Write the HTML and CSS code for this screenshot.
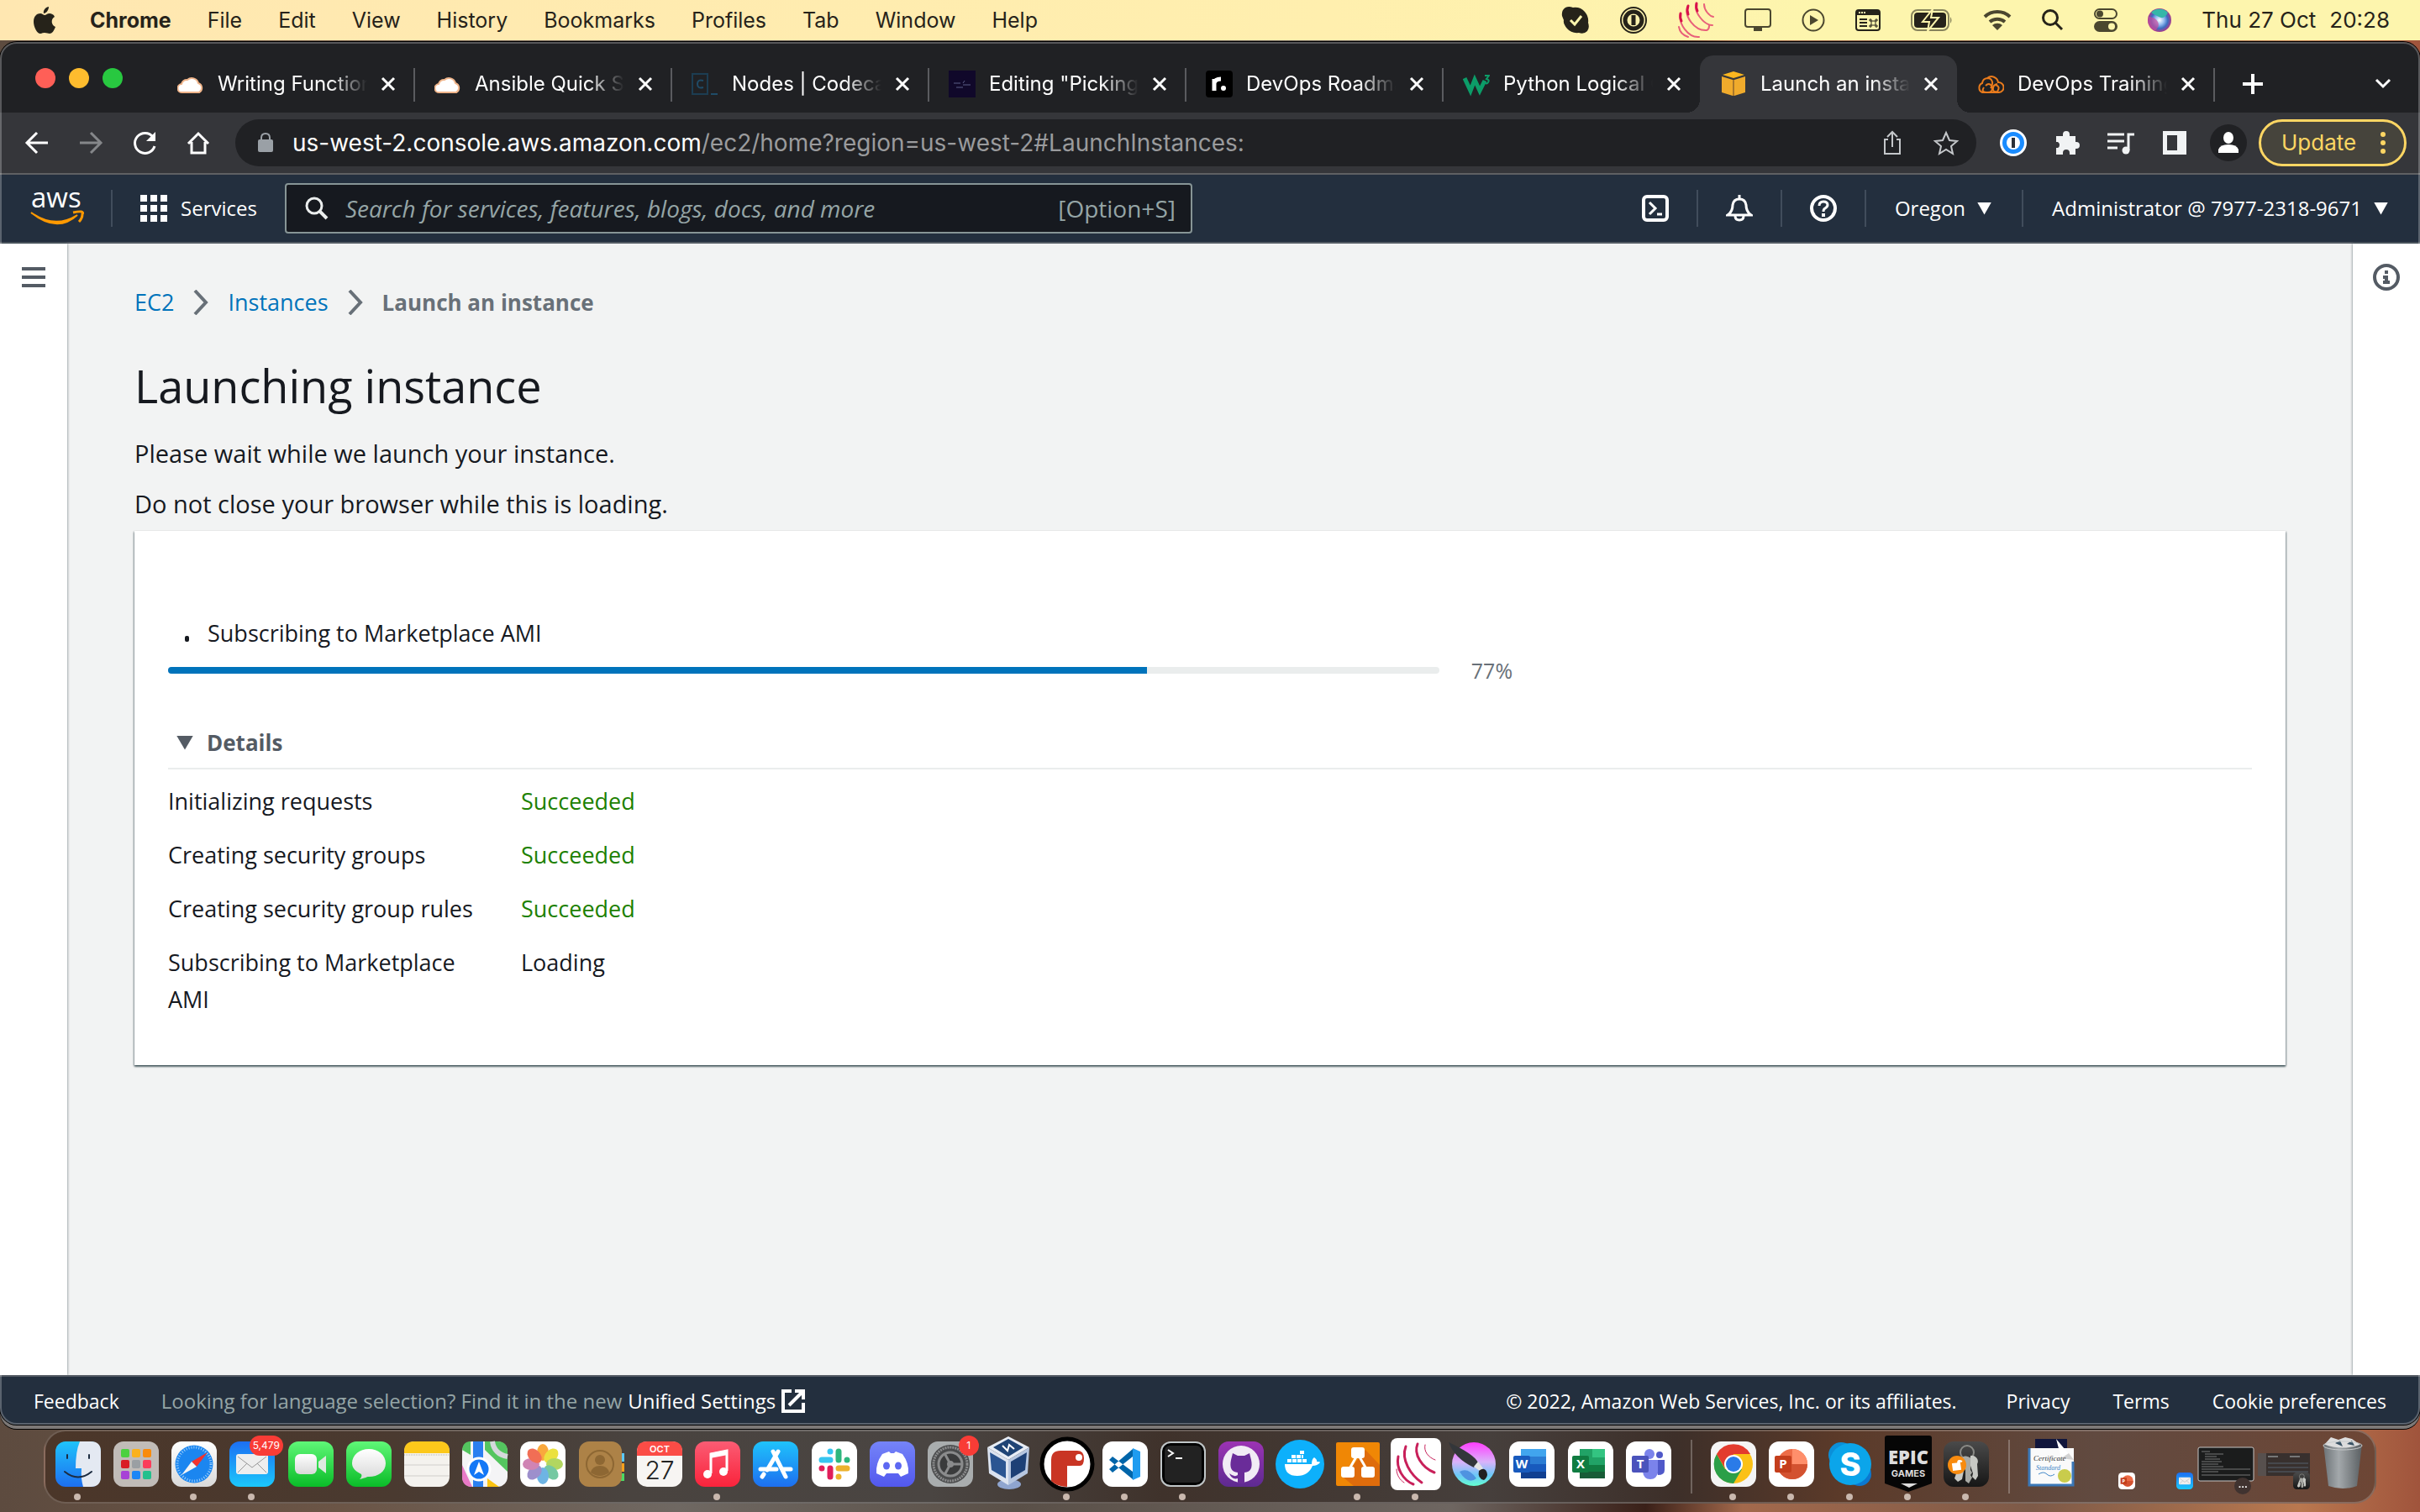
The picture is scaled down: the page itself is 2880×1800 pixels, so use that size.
FILE: index.html
```html
<!DOCTYPE html>
<html lang="en">
<head>
    <meta charset="UTF-8">
    <meta name="viewport" content="width=device-width, initial-scale=1.0">
    <title>Launch an instance | EC2 Management Console</title>
    <link rel="stylesheet" href="styles.css">
</head>
<body>
    <svg class="defs" width="0" height="0" aria-hidden="true">
        <defs>
            <linearGradient id="g-blue" x2="0" y2="1"><stop stop-color="#1fc3fb"/><stop offset="1" stop-color="#1d6ff0"/></linearGradient>
            <linearGradient id="g-mail" x2="0" y2="1"><stop stop-color="#1d6ff2"/><stop offset="1" stop-color="#1bc8fc"/></linearGradient>
            <linearGradient id="g-green" x2="0" y2="1"><stop stop-color="#5ff777"/><stop offset="1" stop-color="#0abc28"/></linearGradient>
            <linearGradient id="g-white" x2="0" y2="1"><stop stop-color="#fff"/><stop offset="1" stop-color="#d9d9d9"/></linearGradient>
            <linearGradient id="g-red" x2="0" y2="1"><stop stop-color="#fb5c74"/><stop offset="1" stop-color="#fa233b"/></linearGradient>
            <linearGradient id="g-discord" x2="0" y2="1"><stop stop-color="#7584f8"/><stop offset="1" stop-color="#5258ee"/></linearGradient>
            <linearGradient id="g-github" x2="0" y2="1"><stop stop-color="#9c33b4"/><stop offset="1" stop-color="#5d2a90"/></linearGradient>
            <linearGradient id="g-krita" x2="0" y2="1"><stop stop-color="#ff3dff"/><stop offset=".45" stop-color="#d9b3fa"/><stop offset=".75" stop-color="#6cc8f8"/><stop offset="1" stop-color="#64ffd0"/></linearGradient>
            <linearGradient id="g-dark" x2="0" y2="1"><stop stop-color="#4a4a4a"/><stop offset="1" stop-color="#161616"/></linearGradient>
            <linearGradient id="g-bin"><stop stop-color="#6c7276"/><stop offset=".4" stop-color="#a3a8ab"/><stop offset="1" stop-color="#5a5f62"/></linearGradient>
            <radialGradient id="g-siri"><stop stop-color="#fff"/><stop offset=".4" stop-color="#8fb8ee"/><stop offset=".7" stop-color="#3b6fc0"/><stop offset="1" stop-color="#a83a8c"/></radialGradient>
        </defs>
        <symbol id="close" viewBox="0 0 18 18"><path d="M2 2l14 14M16 2L2 16" stroke="#fff" stroke-width="3" fill="none"/></symbol>
        <symbol id="cloud" viewBox="0 0 32 32"><path d="M6 26a5 5 0 0 1-1-10 7 7 0 0 1 7-5 8 8 0 0 1 13 4 6 6 0 0 1 1 11z" fill="#fff" stroke="#f0b58b" stroke-width="2"/></symbol>
        <symbol id="fan" viewBox="0 0 54 54">
            <g fill="none" stroke="#c8205a" stroke-linecap="round">
                <path stroke-width="3" d="M15 6c-6 16 6 34 19 43"/>
                <path stroke-width="3" d="M29 3c-5 12 5 28 20 34"/>
                <path stroke-width="3" d="M6 18c-3 14 6 28 18 33"/>
                <path stroke-width="1" d="M38 4c-2 8 4 15 12 18M4 33c0 7 4 13 9 16"/>
            </g>
        </symbol>
        <symbol id="fan-outline" viewBox="0 0 44 44">
            <g fill="none" stroke="#e8607a" stroke-width="2" stroke-linecap="round">
                <path d="M13 5c-6 12 8 30 22 29q3-1 3-5M23 2c-4 10 9 26 19 26M4 14c-3 12 9 29 22 28M32 3c0 7 6 14 11 15M2 30c1 6 5 10 11 12"/>
                <path stroke="#d8104a" stroke-width="3" d="M13 5q-2 5 0 10M23 2q-1 5 1 9M4 14q-1 5 1 9"/>
            </g>
        </symbol>
        <symbol id="envelope" viewBox="0 0 38 24"><rect width="38" height="24" rx="3" fill="#eee"/><path d="M2 3l17 13L36 3M2 22l11-11M36 22L25 11" stroke="#999" stroke-width="1" fill="none"/></symbol>
        <symbol id="keys" viewBox="0 0 54 54"><rect width="54" height="54" rx="12" fill="url(#g-dark)"/><circle cx="28" cy="13" r="8" fill="none" stroke="#8a8a86" stroke-width="2"/><path d="M20 22a7 7 0 0 1 12-2v14l2 3-2 3 2 3-4 7-4-3V34z" fill="#a9aaa5"/><path d="M32 17a7 7 0 0 1 8 10l1 14-3 5-4-4 1-4-3-9zM24 28l-2 4 2 3-2 10-5 3-4-4 7-20z" fill="#c8c9c4"/></symbol>
    </svg>

    <!-- system menu bar -->
    <header class="menubar">
        <nav class="menus">
            <svg class="apple" viewBox="0 0 26 32"><path d="M18 0c0 4-3 8-6 8-1-4 3-8 6-8zM13 10c2 0 3-2 6-2 2 0 5 1 6 4-5 3-4 10 1 12-2 5-4 8-7 8-2 0-3-1-6-1s-3 1-5 1c-4 0-8-8-8-14 0-7 4-10 8-10 2 0 4 2 5 2z" fill="#26231a"/></svg>
            <button class="menu app">Chrome</button>
            <button class="menu">File</button>
            <button class="menu">Edit</button>
            <button class="menu">View</button>
            <button class="menu">History</button>
            <button class="menu">Bookmarks</button>
            <button class="menu">Profiles</button>
            <button class="menu">Tab</button>
            <button class="menu">Window</button>
            <button class="menu">Help</button>
        </nav>
        <div class="tray">
            <svg width="34" height="32" viewBox="0 0 34 32"><path d="M1 11Q0 4 5 1q4-2 9 0 9-1 14 5t4 13q2 6-1 10-4 4-10 2-9 1-14-5T3 16z" fill="#26231a"/><path d="M11 16l5 5 8-10" fill="none" stroke="#fdf5ad" stroke-width="3"/></svg>
            <svg width="32" height="32" viewBox="0 0 32 32"><circle cx="16" cy="16" r="15" fill="none" stroke="#26231a" stroke-width="2"/><circle cx="16" cy="16" r="10" fill="none" stroke="#26231a" stroke-width="5"/><path d="M16 10v12" stroke="#26231a" stroke-width="5"/></svg>
            <svg width="44" height="44"><use href="#fan-outline"/></svg>
            <svg width="32" height="28" viewBox="0 0 32 28"><rect x="1" y="1" width="30" height="21" rx="3" fill="none" stroke="#4b472f" stroke-width="2"/><path d="M11 23h10v4H11z" fill="#4b472f"/></svg>
            <svg width="28" height="28" viewBox="0 0 28 28"><circle cx="14" cy="14" r="12.500" fill="none" stroke="#4b472f" stroke-width="2"/><path d="M10 8l10 6-10 6z" fill="#4b472f"/></svg>
            <svg width="30" height="26" viewBox="0 0 30 26"><rect x="1" y="1" width="28" height="24" rx="3" fill="none" stroke="#26231a" stroke-width="2"/><path d="M1 1h28v6H1z" fill="#26231a"/><path d="M5 12h9M5 16h9M5 20h9" stroke="#26231a" stroke-width="2"/><path d="M19 14h5v5h-5zM19 14h-2v-2h2zM24 14v-2h2v2zM19 19h-2v2h2zM24 19h2v2h-2z" stroke="#26231a" stroke-width="1" fill="none"/><path d="M4 4h8" stroke="#fdf5ad" stroke-width="2" stroke-dasharray="2 1"/></svg>
            <svg width="50" height="26" viewBox="0 0 50 26"><rect x="1" y="1" width="44" height="24" rx="7" fill="none" stroke="#87835c" stroke-width="2"/><rect x="4" y="4" width="38" height="18" rx="4" fill="#26231a"/><path d="M47 9q3 4 0 8z" fill="#87835c"/><path d="M26 0L14 15h8l-2 11 13-16h-9z" fill="#26231a" stroke="#fdf5ad" stroke-width="2"/></svg>
            <svg width="34" height="24" viewBox="0 0 34 24"><path d="M2 8a22 22 0 0 1 30 0M8 14a14 14 0 0 1 18 0" fill="none" stroke="#4b472f" stroke-width="4"/><path d="M11 18a9 9 0 0 1 12 0l-6 6z" fill="#4b472f"/></svg>
            <svg width="26" height="26" viewBox="0 0 26 26"><circle cx="10" cy="10" r="8.500" fill="none" stroke="#26231a" stroke-width="3"/><path d="M16 16l8 8" stroke="#26231a" stroke-width="3"/></svg>
            <svg width="28" height="28" viewBox="0 0 28 28"><rect x="1" y="1" width="26" height="11" rx="5.500" fill="none" stroke="#4b472f" stroke-width="2"/><circle cx="7" cy="6.500" r="4" fill="#4b472f"/><rect y="15" width="28" height="13" rx="6.500" fill="#4b472f"/><circle cx="21" cy="21.500" r="4" fill="#fdf5ad"/></svg>
            <svg width="28" height="28" viewBox="0 0 28 28"><circle cx="14" cy="14" r="14" fill="url(#g-siri)"/><path d="M4 5a14 14 0 0 1 20 0q-4 7-8 6T4 5z" fill="#35b7a8"/><path d="M1 10q8 0 11 6T8 27Q-2 21 1 10z" fill="#c94a9c" opacity=".7"/></svg>
            <time class="clock"><span>Thu 27 Oct</span><span>20:28</span></time>
        </div>
    </header>

    <div class="window">
        <!-- tabs -->
        <div class="tabstrip">
            <div class="lights">
                <button class="light light-red" aria-label="Close window"></button>
                <button class="light light-yellow" aria-label="Minimise window"></button>
                <button class="light light-green" aria-label="Zoom window"></button>
            </div>
            <div class="tab">
                <svg class="favicon"><use href="#cloud"/></svg>
                <span class="tab-title">Writing Functions</span>
                <button class="tab-close" aria-label="Close tab"><svg><use href="#close"/></svg></button>
            </div>
            <div class="tab">
                <svg class="favicon"><use href="#cloud"/></svg>
                <span class="tab-title">Ansible Quick Start</span>
                <button class="tab-close" aria-label="Close tab"><svg><use href="#close"/></svg></button>
            </div>
            <div class="tab">
                <svg class="favicon" viewBox="0 0 32 32"><rect x="1" y="4" width="18" height="24" fill="none" stroke="#1c3d52" stroke-width="2"/><path d="M14 12q-7-2-7 4t7 4M23 28h8" fill="none" stroke="#1f4c68" stroke-width="2"/></svg>
                <span class="tab-title">Nodes | Codecademy</span>
                <button class="tab-close" aria-label="Close tab"><svg><use href="#close"/></svg></button>
            </div>
            <div class="tab">
                <svg class="favicon" viewBox="0 0 32 32"><path d="M0 0h32v32H0z" fill="#10082a"/><path d="M6 15h8M17 17h9M9 20h8M17 15l2-3" stroke="#5b5f86" stroke-width="1"/></svg>
                <span class="tab-title">Editing "Picking a"</span>
                <button class="tab-close" aria-label="Close tab"><svg><use href="#close"/></svg></button>
            </div>
            <div class="tab">
                <svg class="favicon" viewBox="0 0 32 32"><rect width="32" height="32" rx="4"/><path d="M10 24V10M10 15q1-5 8-5" stroke="#fff" stroke-width="5" fill="none"/><circle cx="21" cy="21" r="3" fill="#fff"/></svg>
                <span class="tab-title">DevOps Roadmap</span>
                <button class="tab-close" aria-label="Close tab"><svg><use href="#close"/></svg></button>
            </div>
            <div class="tab tab-before">
                <svg class="favicon" viewBox="0 0 32 32"><path d="M2 9l7 15 5-13 6 13 6-12" fill="none" stroke="#0c9c68" stroke-width="5"/><path d="M26 6h5l-3 4q4 1 2 4t-4 0" fill="none" stroke="#0c9c68" stroke-width="2"/></svg>
                <span class="tab-title">Python Logical Operators</span>
                <button class="tab-close" aria-label="Close tab"><svg><use href="#close"/></svg></button>
            </div>
            <div class="tab tab-active">
                <svg class="favicon" viewBox="0 0 32 32"><path d="M2 7l13 4v19L2 26zM17 11l13-4v19l-13 4z" fill="#f0ab2c"/><path d="M15 11h2v19h-2z" fill="#a8762a"/><path d="M3 5l13-4 13 4-13 4z" fill="#fbb61f"/></svg>
                <span class="tab-title">Launch an instance</span>
                <button class="tab-close" aria-label="Close tab"><svg><use href="#close"/></svg></button>
            </div>
            <div class="tab">
                <svg class="favicon" viewBox="0 0 32 32"><path d="M6 26a6 6 0 0 1 0-11 7 7 0 0 1 6-6 8 8 0 0 1 13 5 6 6 0 0 1 1 12zM12 9c6 0 8 6 4 12M10 18q4-4 7 0 3 8-5 8t-4-6M22 17q6 2 2 8-6 1-5-4 0-4 5-5" fill="none" stroke="#e97b1c" stroke-width="2"/></svg>
                <span class="tab-title">DevOps Training</span>
                <button class="tab-close" aria-label="Close tab"><svg><use href="#close"/></svg></button>
            </div>
            <button class="new-tab" aria-label="New tab"><svg width="24" height="24" viewBox="0 0 24 24"><path d="M12 0v24M0 12h24" stroke="#fff" stroke-width="4"/></svg></button>
            <button class="tab-search" aria-label="Search tabs"><svg width="20" height="14" viewBox="0 0 20 14"><path d="M2 2l8 8 8-8" fill="none" stroke="#fff" stroke-width="3"/></svg></button>
        </div>

        <!-- address bar -->
        <div class="toolbar">
            <button class="tool" aria-label="Back"><svg viewBox="0 0 32 32"><path d="M29 16H5M16 4L4 16l12 12" stroke="#fff" stroke-width="3" fill="none"/></svg></button>
            <button class="tool" aria-label="Forward"><svg viewBox="0 0 32 32"><path d="M3 16h24M16 4l12 12-12 12" stroke="#85878a" stroke-width="3" fill="none"/></svg></button>
            <button class="tool" aria-label="Reload"><svg viewBox="0 0 32 32"><path d="M26 9a12 12 0 1 0 2 11" stroke="#fff" stroke-width="3" fill="none"/><path d="M29 3v11H18z" fill="#fff"/></svg></button>
            <button class="tool" aria-label="Home"><svg viewBox="0 0 32 32"><path d="M8 15v13h16V15M4 17L16 5l12 12" stroke="#fff" stroke-width="3" fill="none"/></svg></button>
            <div class="omnibox">
                <svg class="lock" width="18" height="24" viewBox="0 0 18 24"><path d="M4 10V6q0-5 5-5t5 5v4" fill="none" stroke="#9aa0a6" stroke-width="2"/><rect y="8" width="18" height="15" rx="2" fill="#9aa0a6"/></svg>
                <label for="address">us-west-2.console.aws.amazon.com</label>
                <input id="address" type="text" value="/ec2/home?region=us-west-2#LaunchInstances:">
                <button class="tool" aria-label="Share"><svg viewBox="0 0 32 32"><path d="M11 12H7v17h18V12h-4M16 21V3M10 9l6-6 6 6" stroke="#c4c7ca" stroke-width="2" fill="none"/></svg></button>
                <button class="tool" aria-label="Bookmark this tab"><svg viewBox="0 0 32 32"><path d="M16 4l4 9 9 1-7 6 2 9-8-5-8 5 2-9-7-6 9-1z" stroke="#c4c7ca" stroke-width="2" fill="none"/></svg></button>
            </div>
            <div class="extensions">
                <button class="tool" aria-label="1Password"><svg viewBox="0 0 32 32"><circle cx="16" cy="16" r="16" fill="#fff"/><circle cx="16" cy="16" r="13" fill="#1a8cff"/><circle cx="16" cy="16" r="8" fill="#fff"/><path d="M16 10v12" stroke="#2b3038" stroke-width="4"/></svg></button>
                <button class="tool" aria-label="Extensions"><svg viewBox="0 0 32 32"><path d="M3 8h8V6a4 4 0 0 1 8 0v2h7v7h1a4 4 0 0 1 0 8h-1v7h-7v-2a4 4 0 0 0-8 0v2H3v-8h2a4 4 0 0 0 0-7H3z" fill="#f1f3f4"/></svg></button>
                <button class="tool" aria-label="Media control"><svg viewBox="0 0 32 32"><path d="M0 6h20M0 14h20M0 22h12M25 25V6h7" stroke="#f1f3f4" stroke-width="3" fill="none"/><circle cx="22" cy="25" r="4.500" fill="#f1f3f4"/></svg></button>
                <button class="tool" aria-label="Side panel"><svg viewBox="0 0 32 32"><path d="M2 2h28v28H2zM7 7v18h12V7z" fill="#f1f3f4" fill-rule="evenodd"/></svg></button>
                <button class="tool profile" aria-label="Profile"><svg viewBox="0 0 32 32"><ellipse cx="16" cy="10" rx="6" ry="7" fill="#fff"/><path d="M4 28v-4q2-6 12-6t12 6v4z" fill="#fff"/></svg></button>
            </div>
            <button class="update">Update<svg width="6" height="26" viewBox="0 0 6 26"><g fill="#fdd663"><circle cx="3" cy="3" r="3"/><circle cx="3" cy="13" r="3"/><circle cx="3" cy="23" r="3"/></g></svg></button>
        </div>

        <!-- AWS console navigation -->
        <nav class="aws-nav">
            <a class="aws-logo" href="#" aria-label="AWS home"><svg width="64" height="44" viewBox="0 0 64 44"><text class="aws-word" x="1" y="21">aws</text><path d="M1 27q28 20 55 3-24 22-55-3z" fill="#ff9900" stroke="#ff9900" stroke-width="2"/><path d="M51 27q14-3 11 2 0 5-4 9" fill="none" stroke="#ff9900" stroke-width="3"/></svg></a>
            <button class="services"><svg width="32" height="32" viewBox="0 0 32 32"><path d="M0 4h32M0 16h32M0 28h32" stroke="#fff" stroke-width="8" stroke-dasharray="8 4"/></svg>Services</button>
            <div class="aws-search">
                <svg width="28" height="28" viewBox="0 0 28 28"><circle cx="11" cy="11" r="9" fill="none" stroke="#eaeded" stroke-width="3"/><path d="M17 17l9 9" stroke="#eaeded" stroke-width="4"/></svg>
                <input type="search" aria-label="Search" placeholder="Search for services, features, blogs, docs, and more">
                <span>[Option+S]</span>
            </div>
            <div class="aws-tools">
                <button class="aws-tool" aria-label="CloudShell"><svg viewBox="0 0 32 32"><rect x="2" y="2" width="28" height="28" rx="4" fill="none" stroke="#fff" stroke-width="4"/><path d="M9 9l7 7-7 7M18 23h6" stroke="#fff" stroke-width="3" fill="none"/></svg></button>
                <button class="aws-tool" aria-label="Notifications"><svg viewBox="0 0 32 32"><path d="M16 0v4M2 24q6-4 6-12 1-7 8-7t8 7q0 8 6 12z" fill="none" stroke="#fff" stroke-width="3"/><path d="M11 25q0 5 5 5t5-5" fill="none" stroke="#fff" stroke-width="3"/></svg></button>
                <button class="aws-tool" aria-label="Help"><svg viewBox="0 0 32 32"><circle cx="16" cy="16" r="14" fill="none" stroke="#fff" stroke-width="4"/><path d="M11 13q0-5 5-5t5 4q0 2-3 4-2 1-2 4" fill="none" stroke="#fff" stroke-width="3"/><path d="M14 22h4v4h-4z" fill="#fff"/></svg></button>
                <button class="aws-menu region">Oregon<i class="caret"></i></button>
                <button class="aws-menu">Administrator @ 7977-2318-9671<i class="caret"></i></button>
            </div>
        </nav>

        <div class="page">
            <aside class="rail rail-left">
                <button class="rail-button" aria-label="Open navigation"><svg width="28" height="24" viewBox="0 0 28 24"><path d="M0 2h28M0 12h28M0 22h28" stroke="#545b64" stroke-width="4"/></svg></button>
            </aside>
            <main class="content">
                <nav class="breadcrumb">
                    <a href="#">EC2</a>
                    <svg width="20" height="30" viewBox="0 0 20 30"><path d="M3 1l13 14L3 29" fill="none" stroke="#687078" stroke-width="4"/></svg>
                    <a href="#">Instances</a>
                    <svg width="20" height="30" viewBox="0 0 20 30"><path d="M3 1l13 14L3 29" fill="none" stroke="#687078" stroke-width="4"/></svg>
                    <span>Launch an instance</span>
                </nav>
                <h1>Launching instance</h1>
                <p>Please wait while we launch your instance.</p>
                <p>Do not close your browser while this is loading.</p>
                <section class="card">
                    <div class="current"><i class="spinner"></i><label for="progress">Subscribing to Marketplace AMI</label></div>
                    <div class="progress-row">
                        <progress id="progress" value="77" max="100"></progress>
                        <span>77%</span>
                    </div>
                    <details open>
                        <summary><i class="caret"></i>Details</summary>
                        <table>
                            <tr><th scope="row">Initializing requests</th><td class="succeeded">Succeeded</td></tr>
                            <tr><th scope="row">Creating security groups</th><td class="succeeded">Succeeded</td></tr>
                            <tr><th scope="row">Creating security group rules</th><td class="succeeded">Succeeded</td></tr>
                            <tr><th scope="row">Subscribing to Marketplace AMI</th><td>Loading</td></tr>
                        </table>
                    </details>
                </section>
            </main>
            <aside class="rail rail-right">
                <button class="rail-button" aria-label="Open info panel"><svg width="32" height="32" viewBox="0 0 32 32"><circle cx="16" cy="16" r="14" fill="none" stroke="#545b64" stroke-width="4"/><path d="M14 8h4v4h-4zM12 14h6v6h2v4h-8v-4h2v-2h-2z" fill="#545b64"/></svg></button>
            </aside>
        </div>

        <footer class="aws-footer">
            <a class="feedback" href="#">Feedback</a>
            <span class="language">Looking for language selection? Find it in the new <a href="#">Unified Settings<svg width="28" height="28" viewBox="0 0 28 28"><path d="M12 2H2v24h24V16M9 19L25 3M16 2h10v10" fill="none" stroke="#fff" stroke-width="4"/></svg></a></span>
            <div class="legal">
                <span>© 2022, Amazon Web Services, Inc. or its affiliates.</span>
                <a href="#">Privacy</a>
                <a href="#">Terms</a>
                <a href="#">Cookie preferences</a>
            </div>
        </footer>
    </div>

    <!-- dock -->
    <nav class="dock">
        <button class="dock-item running" aria-label="Finder"><svg viewBox="0 0 54 54"><rect width="54" height="54" rx="12" fill="url(#g-blue)"/><path d="M29 0h13q12 0 12 12v30q0 12-12 12h-9q-3-10-2-22h-7Q24 12 29 0z" fill="#e4e9f2"/><path d="M14 16v4M40 16v4M11 36q16 13 32 0" stroke="#1c2b40" stroke-width="2" stroke-linecap="round" fill="none"/></svg></button>
        <button class="dock-item" aria-label="Launchpad"><svg viewBox="0 0 54 54"><rect width="54" height="54" rx="12" fill="#c1bcb8"/><g><rect x="9" y="9" width="10" height="10" rx="2" fill="#4bd13f"/><rect x="22" y="9" width="10" height="10" rx="2" fill="#fbb11c"/><rect x="35" y="9" width="10" height="10" rx="2" fill="#f98b0b"/><rect x="9" y="22" width="10" height="10" rx="2" fill="#d91d25"/><rect x="22" y="22" width="10" height="10" rx="2" fill="#9a9fa3"/><rect x="35" y="22" width="10" height="10" rx="2" fill="#fb3d5a"/><rect x="9" y="35" width="10" height="10" rx="2" fill="#a743d6"/><rect x="22" y="35" width="10" height="10" rx="2" fill="#1c86f5"/><rect x="35" y="35" width="10" height="10" rx="2" fill="#23c08c"/></g></svg></button>
        <button class="dock-item running" aria-label="Safari"><svg viewBox="0 0 54 54"><rect width="54" height="54" rx="12" fill="url(#g-white)"/><circle cx="27" cy="27" r="22.500" fill="#1b86f0"/><circle cx="27" cy="27" r="20" fill="none" stroke="#9fd0fb" stroke-width="3" stroke-dasharray="1 2"/><path d="M43 13L30 30l-6-6z" fill="#f2322d"/><path d="M12 40l12-16 6 6z" fill="#f4f4f4"/></svg></button>
        <button class="dock-item running" aria-label="Mail"><svg viewBox="0 0 54 54"><rect width="54" height="54" rx="12" fill="url(#g-mail)"/><use href="#envelope" x="8" y="15" width="38" height="24"/></svg><span class="badge">5,479</span></button>
        <button class="dock-item" aria-label="FaceTime"><svg viewBox="0 0 54 54"><rect width="54" height="54" rx="12" fill="url(#g-green)"/><rect x="8" y="15" width="26" height="24" rx="6" fill="url(#g-white)"/><path d="M36 24l9-7v21l-9-7z" fill="#dfe9df"/></svg></button>
        <button class="dock-item" aria-label="Messages"><svg viewBox="0 0 54 54"><rect width="54" height="54" rx="12" fill="url(#g-green)"/><path d="M27 9c11 0 20 7 20 17s-9 16-20 16c-3 0-5 2-11 3 2-2 3-4 2-6-6-3-11-7-11-13C7 16 16 9 27 9z" fill="url(#g-white)"/></svg></button>
        <button class="dock-item" aria-label="Notes"><svg viewBox="0 0 54 54"><rect width="54" height="54" rx="12" fill="#f4f2ee"/><path d="M0 14v-2Q0 0 12 0h30q12 0 12 12v2z" fill="#fcc81b"/><path d="M0 16h54" stroke="#b5b3ae" stroke-dasharray="1 1"/><path d="M0 28h54M0 41h54" stroke="#d0cecb"/></svg></button>
        <button class="dock-item" aria-label="Maps"><svg viewBox="0 0 54 54"><rect width="54" height="54" rx="12" fill="#f4f4f6"/><path d="M27 0h15q12 0 12 12v24L27 10z" fill="#54c55f"/><path d="M0 12Q0 0 10 0v16L0 10z" fill="#54c55f"/><path d="M0 28l12 26Q0 54 0 42z" fill="#e87ac7"/><path d="M30 54V44l14 10z" fill="#fcc412"/><path d="M13 0h12v54H13z" fill="#2a7ff0"/><path d="M36 0q2 15 18 18" stroke="#d5d8dc" stroke-width="6" fill="none"/><circle cx="20" cy="33" r="13" fill="#1478f6" stroke="#fff" stroke-width="3"/><path d="M20 24l6 16-6-4-6 4z" fill="#fff"/></svg></button>
        <button class="dock-item" aria-label="Photos"><svg viewBox="0 0 54 54"><rect width="54" height="54" rx="12" fill="#fff"/><g opacity=".85"><ellipse cx="27" cy="13" rx="7" ry="10" fill="#f99a1c"/><ellipse cx="27" cy="13" rx="7" ry="10" fill="#e8dc1e" transform="rotate(45 27 27)"/><ellipse cx="27" cy="13" rx="7" ry="10" fill="#a5cf45" transform="rotate(90 27 27)"/><ellipse cx="27" cy="13" rx="7" ry="10" fill="#5dbf92" transform="rotate(135 27 27)"/><ellipse cx="27" cy="13" rx="7" ry="10" fill="#55a7e0" transform="rotate(180 27 27)"/><ellipse cx="27" cy="13" rx="7" ry="10" fill="#8c7cc4" transform="rotate(225 27 27)"/><ellipse cx="27" cy="13" rx="7" ry="10" fill="#c86fa8" transform="rotate(270 27 27)"/><ellipse cx="27" cy="13" rx="7" ry="10" fill="#ef5538" transform="rotate(315 27 27)"/></g></svg></button>
        <button class="dock-item" aria-label="Contacts"><svg viewBox="0 0 54 54"><path d="M48 14h6v10h-6z" fill="#5ac8fa"/><path d="M48 26h6v10h-6z" fill="#f7a01c"/><path d="M48 38h6v9h-6z" fill="#4cd964"/><rect width="51" height="54" rx="12" fill="#ad8247"/><circle cx="25" cy="27" r="16" fill="none" stroke="#8d6733" stroke-width="2"/><circle cx="25" cy="22" r="6" fill="#8d6733"/><path d="M14 37q2-8 11-8t11 8q-11 8-22 0z" fill="#8d6733"/></svg></button>
        <button class="dock-item" aria-label="Calendar"><svg viewBox="0 0 54 54"><rect width="54" height="54" rx="12" fill="#f7f5f3"/><path d="M0 17v-5Q0 0 12 0h30q12 0 12 12v5z" fill="#fb4c46"/><text class="cal-month" x="27" y="13">OCT</text><text class="cal-day" x="27" y="45">27</text></svg></button>
        <button class="dock-item running" aria-label="Music"><svg viewBox="0 0 54 54"><rect width="54" height="54" rx="12" fill="url(#g-red)"/><path d="M19 38V15l19-4v24" fill="none" stroke="#fff" stroke-width="3"/><path d="M18 14l21-4v6l-21 4z" fill="#fff"/><ellipse cx="15" cy="39" rx="5" ry="5" fill="#fff"/><ellipse cx="34" cy="36" rx="5" ry="5" fill="#fff"/></svg></button>
        <button class="dock-item" aria-label="App Store"><svg viewBox="0 0 54 54"><rect width="54" height="54" rx="12" fill="url(#g-blue)"/><path d="M24 12l15 30M30 12L17 34M9 33h19M36 33h9M13 39l-2 3" stroke="#fff" stroke-width="5" stroke-linecap="round"/></svg></button>
        <button class="dock-item" aria-label="Slack"><svg viewBox="0 0 54 54"><rect width="54" height="54" rx="12" fill="#fff"/><g stroke-width="7" stroke-linecap="round"><path d="M12 22h10M22 12v0" stroke="#36c5f0"/><path d="M32 12v10M42 22v0" stroke="#2eb67d"/><path d="M32 32h10M32 42v0" stroke="#ecb22e"/><path d="M22 32v10M12 32v0" stroke="#e01e5a"/></g></svg></button>
        <button class="dock-item" aria-label="Discord"><svg viewBox="0 0 54 54"><rect width="54" height="54" rx="12" fill="url(#g-discord)"/><path d="M15 15l8-3 2 2h4l2-2 8 3q8 11 7 23l-9 4-3-4H20l-3 4-9-4q-1-12 7-23z" fill="#fff"/><ellipse cx="20" cy="29" rx="4" ry="4.500" fill="#5d68f2"/><ellipse cx="34" cy="29" rx="4" ry="4.500" fill="#5d68f2"/></svg></button>
        <button class="dock-item" aria-label="System Preferences"><svg viewBox="0 0 54 54"><rect width="54" height="54" rx="12" fill="#a9adae"/><circle cx="27" cy="27" r="23" fill="#4a4b4c"/><circle cx="27" cy="27" r="20" fill="none" stroke="#8a8b8c" stroke-width="3" stroke-dasharray="2 1"/><circle cx="27" cy="27" r="14" fill="#3a3b3c" stroke="#8a8b8c" stroke-width="3"/><path d="M27 27h14M27 27l-7-13M27 27l-7 13" stroke="#8a8b8c" stroke-width="3"/><circle cx="27" cy="27" r="4" fill="#8a8b8c"/></svg><span class="badge badge-one">1</span></button>
        <button class="dock-item" aria-label="VirtualBox"><svg viewBox="0 0 54 54"><ellipse cx="28" cy="51" rx="14" ry="6" fill="#8fa5cf"/><path d="M27-6l25 13-25 15L2 7z" fill="#e8edf5"/><path d="M27-3l18 10-18 11L9 7z" fill="#1f4475"/><path d="M2 7l25 15v30L4 38z" fill="#dbe3f0"/><path d="M5 13l19 11v20L7 34z" fill="#2a5592"/><path d="M52 7L27 22v30l23-14z" fill="#b6c6e0"/><path d="M49 13L30 24v20l17-10z" fill="#1d4076"/><path d="M20 5l6 6 2-7 6 5" fill="none" stroke="#fff" stroke-width="2"/></svg></button>
        <button class="dock-item running" aria-label="Papers"><svg viewBox="0 0 54 54"><circle cx="27" cy="27" r="30" fill="#fff" stroke="#000" stroke-width="5"/><path d="M8 47V22q0-11 11-11h20q8 0 8 9t-5 9H27v25q-12 0-19-7z" fill="#c93524"/><circle cx="41" cy="19" r="4" fill="#fff"/></svg></button>
        <button class="dock-item running" aria-label="Visual Studio Code"><svg viewBox="0 0 54 54"><rect width="54" height="54" rx="12" fill="#fff"/><path d="M36 9L8 33l4 4 24-19zM36 45L8 22l4-4 24 18z" fill="#0065a9"/><path d="M36 8l9 4v30l-9 4z" fill="#1f9cf0"/></svg></button>
        <button class="dock-item running" aria-label="Terminal"><svg viewBox="0 0 54 54"><rect width="54" height="54" rx="12" fill="#c0c6c8"/><rect x="2" y="2" width="50" height="50" rx="10" fill="#000"/><rect x="5" y="5" width="44" height="44" rx="6" fill="#222"/><path d="M9 10l6 4-6 4M18 20h8" stroke="#fff" stroke-width="2" fill="none"/></svg></button>
        <button class="dock-item" aria-label="GitHub Desktop"><svg viewBox="0 0 54 54"><rect width="54" height="54" rx="12" fill="url(#g-github)"/><circle cx="27" cy="27" r="22" fill="#f1ebf5"/><path d="M17 14l6 3h8l6-3 2 8q3 14-8 15v13h-8v-6q-7 2-10-6 6 5 10 2v-3q-11-1-8-15z" fill="#6a2c99"/></svg></button>
        <button class="dock-item" aria-label="Docker"><svg viewBox="0 0 54 54"><circle cx="27" cy="27" r="29" fill="#0db0fb"/><path d="M9 27h32q0-6 3-8 4 3 3 5 4 0 4 1-3 4-9 4-5 12-18 12Q9 41 9 27z" fill="#fff"/><path d="M12 23h24M17 18h14M27 13h5" stroke="#fff" stroke-width="4" stroke-dasharray="5 1"/></svg></button>
        <button class="dock-item running" aria-label="draw.io"><svg viewBox="0 0 54 54"><rect x="1" y="1" width="52" height="52" rx="2" fill="#f08705"/><path d="M36 10l17 18v25H22L10 43z" fill="#df6c0c"/><path d="M27 15L15 36M27 15l12 21" stroke="#fff" stroke-width="3"/><rect x="19" y="7" width="16" height="13" rx="3" fill="#fff"/><rect x="7" y="30" width="16" height="13" rx="3" fill="#fff"/><rect x="31" y="30" width="16" height="13" rx="3" fill="#fff"/></svg></button>
        <button class="dock-item running" aria-label="Fan"><svg viewBox="0 0 54 54"><rect x="-3" y="-4" width="60" height="62" rx="8" fill="#fff"/><use href="#fan" width="54" height="54"/></svg></button>
        <button class="dock-item" aria-label="Krita"><svg viewBox="0 0 54 54"><circle cx="27" cy="27" r="26" fill="url(#g-krita)"/><path d="M10 36q10-6 20 8-10 8-20-8z" fill="#4f93e0"/><path d="M-3 1q30 14 35 24l-5 6Q4 20-3 1z" fill="#33363a"/><path d="M27 30l5-6 6 8-4 3z" fill="#e4e4e4"/><path d="M33 35q8-6 10 4 0 4-4 7-8-2-6-11z" fill="#222"/></svg></button>
        <button class="dock-item" aria-label="Word"><svg viewBox="0 0 54 54"><rect width="54" height="54" rx="12" fill="#fff"/><path d="M14 9h30v9H14z" fill="#41a5ee"/><path d="M14 18h30v9H14z" fill="#2b7cd3"/><path d="M14 27h30v9H14z" fill="#185abd"/><path d="M14 36h30v8H14z" fill="#103f91"/><rect x="5" y="17" width="20" height="20" rx="2" fill="#185abd"/><text class="office" x="15" y="32">W</text></svg></button>
        <button class="dock-item" aria-label="Excel"><svg viewBox="0 0 54 54"><rect width="54" height="54" rx="12" fill="#fff"/><path d="M14 9h15v10H14z" fill="#21a366"/><path d="M29 9h15v10H29z" fill="#33c481"/><path d="M14 19h30v9H14z" fill="#21a366"/><path d="M14 28h30v8H14z" fill="#107c41"/><path d="M14 36h30v8H14z" fill="#185c37"/><rect x="5" y="17" width="20" height="20" rx="2" fill="#107c41"/><text class="office" x="15" y="32">X</text></svg></button>
        <button class="dock-item" aria-label="Teams"><svg viewBox="0 0 54 54"><rect width="54" height="54" rx="12" fill="#fff"/><circle cx="28" cy="15" r="6" fill="#7b83eb"/><circle cx="40" cy="16" r="4" fill="#5059c9"/><path d="M32 22h14v12q0 6-8 6z" fill="#5059c9"/><path d="M20 22h18v14q-1 9-9 9t-9-9z" fill="#7b83eb"/><rect x="7" y="17" width="20" height="20" rx="2" fill="#4b53bc"/><text class="office" x="17" y="32">T</text></svg></button>
        <i class="dock-sep"></i>
        <button class="dock-item running" aria-label="Chrome"><svg viewBox="0 0 54 54"><rect width="54" height="54" rx="12" fill="#f4f4f4"/><circle cx="27" cy="27" r="23" fill="#fbc116"/><path d="M7 15a23 23 0 0 1 40 0H27z" fill="#e33b2e"/><path d="M7 15a23 23 0 0 0 20 35l10-17H17z" fill="#2b9f48"/><path d="M7 15l10 17 10-17z" fill="#e33b2e"/><circle cx="27" cy="27" r="11" fill="#fff"/><circle cx="27" cy="27" r="9" fill="#2a7be8"/></svg></button>
        <button class="dock-item running" aria-label="PowerPoint"><svg viewBox="0 0 54 54"><rect width="54" height="54" rx="12" fill="#fff"/><circle cx="28" cy="27" r="18" fill="#ed6c47"/><path d="M28 9a18 18 0 0 1 18 18H28z" fill="#ff8f6b"/><path d="M10 27h36a18 18 0 0 1-36 0z" fill="#d35230"/><rect x="7" y="17" width="20" height="20" rx="2" fill="#c43e1c"/><text class="office" x="17" y="32">P</text></svg></button>
        <button class="dock-item running" aria-label="Skype"><svg viewBox="0 0 54 54"><circle cx="16" cy="16" r="15" fill="#0b8fd8"/><circle cx="38" cy="39" r="14" fill="#0b78d0"/><circle cx="27" cy="27" r="25" fill="#0ba5ea"/><text class="skype" x="27" y="41">S</text></svg></button>
        <button class="dock-item running" aria-label="Epic Games"><svg viewBox="0 0 54 54"><path d="M-1-4q0-3 3-3h50q3 0 3 3v54L27 60-1 50z" fill="#060606"/><text class="epic" x="27" y="27">EPIC</text><text class="games" x="27" y="42">GAMES</text><path d="M18 50h20l-10 5z" fill="#ddd"/></svg></button>
        <button class="dock-item running" aria-label="Keychain Access"><svg viewBox="0 0 54 54"><use href="#keys" width="54" height="54"/><circle cx="16" cy="28" r="11" fill="#f88b0f"/><path d="M11 27l8-1 1 7-8 1zM17 26q0-5 5-2" stroke="#fff" stroke-width="2" fill="#fff"/></svg></button>
        <i class="dock-sep"></i>
        <button class="dock-item" aria-label="Certificates"><svg viewBox="0 0 54 54"><path d="M8-3h38v20H8z" fill="#11163c"/><path d="M0 8h54v45H0z" fill="#fafafa"/><path d="M1 8v44h52V24" fill="none" stroke="#3a78b8" stroke-width="3"/><path d="M33-3l21 25-15-2z" fill="#fff"/><path d="M39 20l15 2-6-8z" fill="#d2d2d2"/><text class="cert" x="6" y="23">Certificate</text><text class="cert cert-small" x="9" y="34">Standard</text><path d="M12 39q6-4 10 0t9 0" fill="none" stroke="#3f86c8"/><circle cx="43" cy="41" r="8" fill="#c9cc4c"/></svg></button>
        <div class="dock-item"><svg class="mini" viewBox="0 0 54 54"><rect width="54" height="54" rx="12" fill="#fff"/><circle cx="30" cy="27" r="18" fill="#ed6c47"/><path d="M12 27h36a18 18 0 0 1-36 0z" fill="#d35230"/><rect x="7" y="17" width="20" height="20" fill="#c43e1c"/><text class="office" x="17" y="32">P</text></svg></div>
        <div class="dock-item"><svg class="mini" viewBox="0 0 54 54"><rect width="54" height="54" rx="12" fill="url(#g-mail)"/><use href="#envelope" x="8" y="15" width="38" height="24"/></svg></div>
        <button class="dock-item" aria-label="Terminal window"><svg viewBox="0 0 54 54"><rect x="-6" y="7" width="66" height="40" rx="2" fill="#1b1c1c" stroke="#c6c6c6" stroke-width="1"/><path d="M-2 12h10M2 15h22M2 18h14M2 21h18M-2 24h24M-2 27h20M-2 30h26M-2 33h58M-2 36h20M-2 40h58" stroke="#777" stroke-width="1"/></svg><svg class="mini mini-low" viewBox="0 0 54 54"><circle cx="27" cy="27" r="27" fill="#403330"/><path d="M15 30h26" stroke="#fff" stroke-width="5" stroke-dasharray="5 5"/></svg></button>
        <button class="dock-item" aria-label="Keychain window"><svg viewBox="0 0 54 54"><rect x="-4" y="14" width="62" height="27" fill="#38302e"/><path d="M-4 14h10v27H-4z" fill="#57504e"/><path d="M8 26h48M8 31h48M8 36h48" stroke="#54616d" stroke-width="1"/><path d="M8 18h48" stroke="#777" stroke-width="2" stroke-dasharray="12 14"/></svg><svg class="mini" viewBox="0 0 54 54"><use href="#keys" width="54" height="54"/></svg></button>
        <button class="dock-item" aria-label="Bin"><svg viewBox="0 0 54 54"><path d="M5 4l8-9 9 3 8-3 8 2 10 7-2 6H8z" fill="#ddd"/><path d="M18 2l6-3 3 7zM32 3l6-4 3 6z" fill="#3a5365"/><path d="M4 3q23 9 46 0l-6 50q-17 6-34 0z" fill="url(#g-bin)"/><ellipse cx="27" cy="5" rx="23" ry="5" fill="none" stroke="#c8cbcc" stroke-width="1"/></svg></button>
    </nav>
</body>
</html>
```
FILE: styles.css
```css
* {
    box-sizing: border-box;
}
body {
    margin: 0;
    min-height: 100vh;
    display: flex;
    flex-direction: column;
    font-family: "Open Sans", "Noto Sans", sans-serif;
    font-size: 27px;
    line-height: 44px;
    color: #16191f;
    background: linear-gradient(90deg, #5d4b3f, #6b5546 14%, #6f6862 28%, #5a5048 42%, #6e6661 60%, #3a2018 68%, #a3694c 72%, #7d5a48 84%, #b9784f 95%, #a0543c);
}
button {
    border: 0;
    padding: 0;
    background: none;
    color: inherit;
    font: inherit;
}
input {
    border: 0;
    padding: 0;
    outline: 0;
    background: none;
    font: inherit;
}
a {
    color: inherit;
    text-decoration: none;
}
svg {
    flex: none;
    display: block;
}
.defs {
    position: absolute;
}

/* menu bar */
.menubar {
    height: 48px;
    display: flex;
    justify-content: space-between;
    align-items: center;
    padding: 0 36px 0 40px;
    background: linear-gradient(90deg, #ffe7b1, #ffefae 55%, #fdf5ad 75%);
    font-family: Inter, sans-serif;
    font-size: 25px;
    color: #26231a;
}
.menus {
    display: flex;
    align-items: center;
    gap: 43px;
}
.apple {
    width: 26px;
    height: 32px;
    margin-right: -2px;
}
.app {
    font-weight: 700;
}
.tray {
    display: flex;
    align-items: center;
    gap: 36px;
}
.clock {
    display: flex;
    gap: 16px;
    font-size: 26px;
}

/* browser window */
.window {
    position: relative;
    flex: 1;
    display: flex;
    flex-direction: column;
    margin: 2px 0 6px;
    border-radius: 20px;
    overflow: hidden;
    box-shadow: 0 0 0 1px #000, 0 5px 0 #7d7977, 0 6px 0 #000;
}
.window::after {
    content: "";
    position: absolute;
    inset: 0;
    border: 2px solid rgba(255, 255, 255, .25);
    border-radius: 20px;
    pointer-events: none;
}
.tabstrip {
    height: 84px;
    padding-top: 16px;
    display: flex;
    background: #202124;
    font-family: Inter, sans-serif;
    font-size: 24px;
    color: #fff;
}
.lights {
    width: 187px;
    padding-left: 42px;
    display: flex;
    align-items: center;
    gap: 16px;
    height: 54px;
}
.light {
    width: 24px;
    height: 24px;
    border-radius: 50%;
}
.light-red {
    background: #ff5f57;
}
.light-yellow {
    background: #febc2e;
}
.light-green {
    background: #28c840;
}
.tab {
    position: relative;
    flex: 0 1 306px;
    min-width: 0;
    display: flex;
    align-items: center;
    gap: 16px;
    padding: 0 22px 0 24px;
}
.tab::after {
    content: "";
    position: absolute;
    right: -1px;
    top: 15px;
    width: 2px;
    height: 40px;
    background: #5a5b5f;
}
.tab-before::after {
    display: none;
}
.tab-active {
    background: #35363a;
    border-radius: 16px 16px 0 0;
}
.tab-active::before,
.tab-active::after {
    content: "";
    position: absolute;
    top: auto;
    bottom: 0;
    width: 16px;
    height: 16px;
}
.tab-active::before {
    left: -16px;
    background: radial-gradient(circle at 0 0, transparent 16px, #35363a 16px);
}
.tab-active::after {
    right: -16px;
    background: radial-gradient(circle at 100% 0, transparent 16px, #35363a 16px);
}
.favicon {
    width: 32px;
    height: 32px;
}
.tab-title {
    flex: 1;
    overflow: hidden;
    white-space: nowrap;
    -webkit-mask-image: linear-gradient(90deg, #000 75%, transparent);
    mask-image: linear-gradient(90deg, #000 75%, transparent);
}
.tab-close svg {
    width: 18px;
    height: 18px;
}
.new-tab {
    margin-left: 34px;
}
.tab-search {
    margin: 0 34px 0 auto;
}

/* toolbar */
.toolbar {
    display: flex;
    align-items: center;
    gap: 32px;
    height: 74px;
    padding: 0 16px 0 28px;
    background: #35363a;
    border-bottom: 2px solid #5f6063;
    font-family: Inter, sans-serif;
    color: #fff;
}
.tool svg {
    width: 32px;
    height: 32px;
}
.omnibox {
    flex: 1;
    display: flex;
    align-items: center;
    gap: 32px;
    height: 56px;
    margin-left: -4px;
    padding: 0 20px 0 27px;
    border-radius: 28px;
    background: #202124;
    font-size: 28px;
}
.lock {
    margin-right: -9px;
}
.omnibox input {
    flex: 1;
    margin-left: -32px;
    color: #9a9b9d;
}
.extensions {
    display: flex;
    align-items: center;
    gap: 32px;
    margin-left: -4px;
}
.profile {
    margin: 0 -6px;
    padding: 6px;
    border-radius: 50%;
    background: #202124;
}
.update {
    display: flex;
    align-items: center;
    justify-content: space-between;
    width: 176px;
    height: 56px;
    margin-left: -12px;
    padding: 0 22px 0 24px;
    border: 3px solid #fdd663;
    border-radius: 28px;
    background: #46443c;
    color: #fdd663;
    font-size: 26px;
}

/* AWS navigation */
.aws-nav {
    display: flex;
    align-items: center;
    height: 82px;
    padding-left: 36px;
    background: #232f3e;
    border-bottom: 2px solid #545b64;
    color: #fff;
    font-size: 24px;
}
.aws-logo {
    padding-right: 32px;
    border-right: 2px solid #414d5c;
}
.aws-word {
    font-size: 33px;
    fill: #fff;
}
.services {
    display: flex;
    align-items: center;
    gap: 16px;
    margin: 0 33px;
}
.aws-search {
    flex: 0 1 1080px;
    display: flex;
    align-items: center;
    gap: 20px;
    height: 60px;
    padding: 0 18px 0 22px;
    border: 2px solid #879596;
    border-radius: 4px;
    background: #16191f;
    color: #95a5a6;
    font-size: 28px;
}
.aws-search input {
    flex: 1;
}
.aws-search input::placeholder {
    color: #95a5a6;
    font-style: italic;
    opacity: 1;
}
.aws-tools {
    display: flex;
    align-items: center;
    margin-left: auto;
}
.aws-tool,
.aws-menu {
    display: flex;
    align-items: center;
    gap: 14px;
    height: 44px;
    padding: 0 33px;
}
.aws-menu {
    padding: 0 38px 0 34px;
}
.aws-tool,
.region {
    border-right: 2px solid #414d5c;
}
.region {
    padding-right: 36px;
}
.aws-tool svg {
    width: 32px;
    height: 32px;
}
.caret {
    width: 17px;
    height: 15px;
    background: currentColor;
    clip-path: polygon(0 0, 100% 0, 50% 100%);
}

/* page */
.page {
    flex: 1;
    display: flex;
    background: #f2f3f3;
}
.rail {
    flex: 0 0 80px;
    padding-top: 24px;
    background: #fff;
    box-shadow: 0 0 3px rgba(0, 28, 36, .6);
}
.rail-button {
    display: flex;
    align-items: center;
    justify-content: center;
    width: 100%;
    height: 32px;
}
.content {
    flex: 1;
    padding: 48px 80px;
}
.breadcrumb {
    display: flex;
    align-items: center;
    gap: 22px;
    color: #0073bb;
}
.breadcrumb span {
    color: #687078;
    font-size: 26px;
    font-weight: 700;
}
h1 {
    margin: 41px 0 23px;
    font-size: 54px;
    font-weight: 400;
    line-height: 72px;
}
p {
    margin: 0 0 16px;
    font-size: 29px;
}
.card {
    margin-top: -6px;
    padding: 100px 40px 46px;
    background: #fff;
    box-shadow: 0 2px 2px rgba(0, 28, 36, .5), 1px 1px 2px rgba(0, 28, 36, .3), -1px 1px 2px rgba(0, 28, 36, .3);
}
.current {
    display: flex;
}
.spinner {
    width: 5px;
    height: 7px;
    margin: 25px 22px 0 20px;
    border-radius: 2px;
    background: #16191f;
}
.progress-row {
    display: flex;
    align-items: center;
    gap: 38px;
    color: #687078;
    font-size: 25px;
}
progress {
    appearance: none;
    width: 61%;
    height: 8px;
    border: 0;
    border-radius: 4px;
    overflow: hidden;
}
progress::-webkit-progress-bar {
    background: #eaeded;
}
progress::-webkit-progress-value {
    background: #0073bb;
}
details {
    margin-top: 42px;
}
summary {
    display: flex;
    align-items: center;
    gap: 16px;
    padding: 0 10px 8px;
    border-bottom: 2px solid #eaeded;
    color: #545b64;
    font-size: 26px;
    font-weight: 700;
}
summary .caret {
    width: 20px;
    height: 17px;
}
table {
    width: 840px;
    margin-top: 6px;
    border-collapse: collapse;
    table-layout: fixed;
}
th,
td {
    padding: 10px 40px 10px 0;
    font-weight: 400;
    text-align: left;
    vertical-align: top;
}
.succeeded {
    color: #1d8102;
}

/* footer */
.aws-footer {
    display: flex;
    align-items: center;
    height: 59px;
    padding: 0 40px;
    border-top: 2px solid #545b64;
    background: #232f3e;
    color: #fff;
    font-size: 23px;
}
.language {
    display: flex;
    gap: 7px;
    margin-left: 50px;
    color: #95a5a6;
    font-size: 24px;
}
.language a {
    display: flex;
    align-items: center;
    gap: 7px;
    color: #fff;
}
.legal {
    display: flex;
    gap: 51px;
    margin-left: auto;
}
.legal span {
    margin-right: 8px;
}

/* dock */
.dock {
    display: flex;
    height: 88px;
    margin: 0 52px 10px;
    padding: 0 4px;
    border: 2px solid rgba(255, 255, 255, .2);
    border-radius: 26px;
    background: linear-gradient(90deg, #4b3629, #4a3a30 15%, #49433f 25%, #4a4542 38%, #3f322b 48%, #463f3c 62%, #3d2f29 70%, #5b3a29 77%, #614a40 88%, #6d4635);
}
.dock-item {
    position: relative;
    flex: 1;
    display: flex;
    justify-content: center;
    padding-top: 12px;
}
.dock-item svg {
    width: 54px;
    height: 54px;
    overflow: visible;
}
.running::after {
    content: "";
    position: absolute;
    left: 50%;
    bottom: 2px;
    width: 8px;
    height: 8px;
    margin-left: -5px;
    border-radius: 50%;
    background: #c9b8ae;
}
.dock-sep {
    width: 2px;
    height: 64px;
    margin: 10px 15px;
    background: rgba(255, 255, 255, .25);
}
.badge {
    position: absolute;
    top: 5px;
    right: -2px;
    min-width: 24px;
    height: 24px;
    padding: 0 4px;
    border-radius: 12px;
    background: #f93c36;
    color: #fff;
    font-family: Inter, sans-serif;
    font-size: 12px;
    line-height: 24px;
}
.badge-one {
    right: 1px;
}
.dock-item .mini {
    position: absolute;
    left: 45px;
    top: 49px;
    width: 20px;
    height: 20px;
}
.dock-item .mini-low {
    top: 55px;
}
.dock text {
    font-family: Inter, sans-serif;
    text-anchor: middle;
    fill: #fff;
}
.dock .cal-month {
    font-size: 11px;
    font-weight: 600;
}
.dock .cal-day {
    font-size: 30px;
    font-weight: 300;
    fill: #222;
}
.dock .office {
    font-family: "Open Sans", sans-serif;
    font-size: 15px;
    font-weight: 700;
}
.dock .skype {
    font-size: 38px;
    font-weight: 800;
}
.dock .epic {
    font-family: "Open Sans", sans-serif;
    font-size: 22px;
    font-weight: 800;
    fill: #ddd;
}
.dock .games {
    font-size: 11px;
    font-weight: 700;
    fill: #ddd;
}
.dock .cert {
    font-family: "Liberation Serif", serif;
    font-size: 9px;
    font-style: italic;
    text-anchor: start;
    fill: #333;
}
.dock .cert-small {
    font-size: 8px;
    fill: #3f86c8;
}
```
